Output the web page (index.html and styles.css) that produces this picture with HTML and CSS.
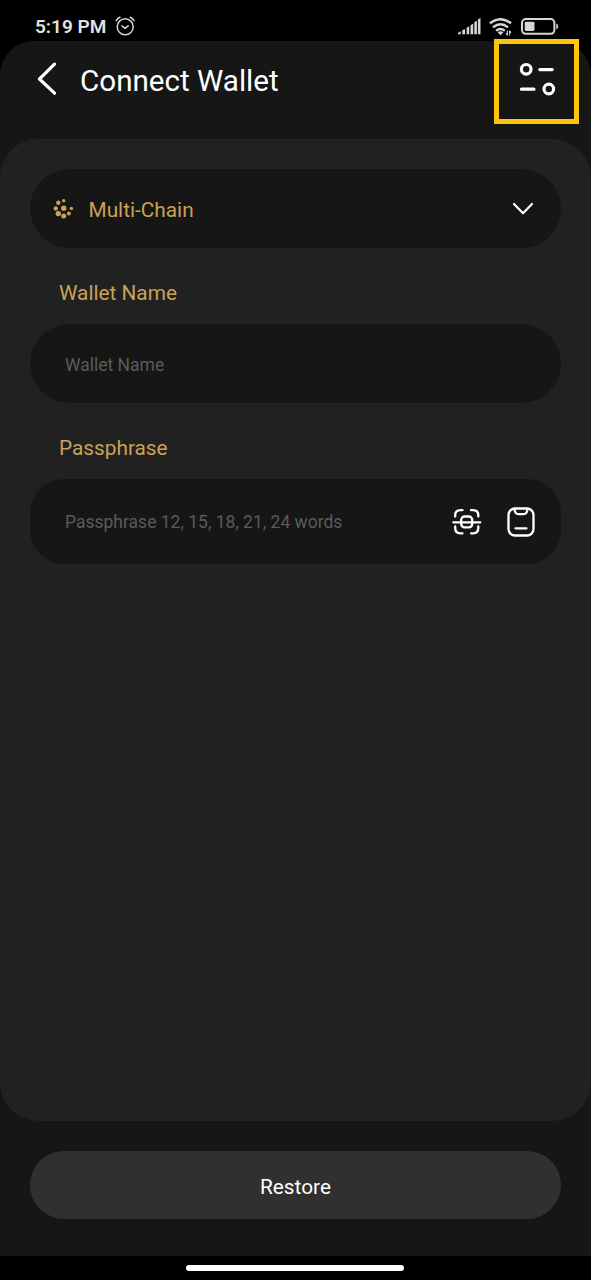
FILE: index.html
```html
<!DOCTYPE html>
<html lang="en">
<head>
<meta charset="utf-8">
<title>Connect Wallet</title>
<link rel="stylesheet" href="styles.css">
</head>
<body>
<div class="phone">
  <div class="status-bar">
    <div class="status-left">
      <span class="clock">5:19 PM</span>
      <svg class="alarm" width="20" height="20" viewBox="0 0 20 20" fill="none" stroke="#d6d6d6" stroke-width="1.5" stroke-linecap="round" stroke-linejoin="round">
        <circle cx="10.2" cy="10.8" r="8"/>
        <path d="M7 9.8l3 2.5 3.2-2.5M1.2 4.6Q2.5 2.4 5 1.2M19 4.6Q17.700 2.400 15.200 1.200"/>
      </svg>
    </div>
    <div class="status-right">
      <svg width="23" height="17" viewBox="0 0 23 17" fill="#d6d6d6">
        <path d="M0 16.200v-1.200l2.800-1.700v2.900zM4.300 12.300l2.700-1.300v5.200h-2.700zM8.600 9.700l2.600-1.500v8h-2.600zM12.500 7.200l2.700-1.500v10.500h-2.700zM16.300 4.200l2.600-1.500v13.500h-2.600zM19.900 1.500l2.600-1.500v16.200h-2.600z"/>
      </svg>
      <svg width="24" height="18" viewBox="0 0 24 18" fill="none" stroke="#d6d6d6" stroke-width="2.400">
        <path d="M.9 5.300Q11.500-2.900 22.100 5.300M4 9.400Q11.500 3.300 19 9.400M7.200 12.800Q11.500 9.300 15.800 12.800"/>
        <path d="M8.600 14.300Q11.500 12.300 14.300 14.300L11.500 17.300z" fill="#d6d6d6" stroke="none"/>
        <path d="M18.300 17.500v-5M18.300 17.200l-1.300-2M20.700 12.500v5M20.700 12.800l1.300 2" stroke-width="1.100"/>
      </svg>
      <svg width="38" height="17" viewBox="0 0 38 17">
        <rect x="1" y="1" width="32.400" height="14.800" rx="3.800" fill="none" stroke="#d6d6d6" stroke-width="2"/>
        <rect x="3.700" y="3.800" width="9.800" height="9.200" rx="1.400" fill="#d6d6d6"/>
        <path d="M35.300 5.800Q37.200 5.800 37.200 8.400T35.300 11z" fill="#d6d6d6"/>
      </svg>
    </div>
  </div>

  <main class="app">
    <header class="header">
      <svg class="back" width="21" height="34" viewBox="0 0 21 34" fill="none" stroke="#fff" stroke-width="3.200" stroke-linecap="round" stroke-linejoin="round">
        <path d="M17.500 2.200L2.500 17l15 14.200"/>
      </svg>
      <h1 class="title">Connect Wallet</h1>
      <button class="settings" aria-label="Settings">
        <svg width="37" height="34" viewBox="0 0 37 34" fill="none" stroke="#fff" stroke-width="3.200" stroke-linecap="round">
          <circle cx="7.200" cy="7.300" r="4.800"/>
          <path d="M20.800 7.600h12.400M2.500 27.200h12.500"/>
          <circle cx="29.800" cy="27" r="4.800"/>
        </svg>
        <span class="highlight"></span>
      </button>
    </header>

    <section class="panel">
      <div class="field chain">
        <svg width="22" height="22" viewBox="0 0 22 22" fill="#c9a255">
          <circle cx="10.700" cy="2.700" r="1.700"/><circle cx="5.300" cy="4.800" r="2.200"/>
          <circle cx="2.800" cy="10.500" r="2.200"/><circle cx="10.700" cy="10.300" r="2.700"/>
          <circle cx="18.400" cy="10.400" r="1.700"/><circle cx="5.300" cy="15.600" r="2.700"/>
          <circle cx="15.900" cy="15.500" r="2"/><circle cx="10.700" cy="17.900" r="2.500"/>
        </svg>
        <span class="chain-name">Multi-Chain</span>
        <svg width="22" height="14" viewBox="0 0 22 14" fill="none" stroke="#fff" stroke-width="2.200" stroke-linecap="round" stroke-linejoin="round">
          <path d="M2 2l9 9.200L20 2"/>
        </svg>
      </div>
      <div class="label">Wallet Name</div>
      <div class="field name"><span class="placeholder">Wallet Name</span></div>
      <div class="label">Passphrase</div>
      <div class="field phrase">
        <span class="placeholder">Passphrase 12, 15, 18, 21, 24 words</span>
        <svg class="scan" width="30" height="28" viewBox="0 0 30 28" fill="none" stroke="#fff" stroke-width="2.300" stroke-linecap="round">
          <path d="M3.200 8.500V7.500Q3.200 2.200 8.500 2.200h2M19 2.200h2Q26.300 2.200 26.300 7.500v1M3.200 18.500v1.500Q3.200 25.300 8.500 25.300h2M19 25.300h2Q26.300 25.300 26.300 20v-1.500M1.300 14.300h27"/>
          <rect x="9.200" y="8.500" width="11" height="10.800" rx="3.300"/>
        </svg>
        <svg width="28" height="30" viewBox="0 0 28 30" fill="none" stroke="#fff" stroke-width="2.300" stroke-linecap="round" stroke-linejoin="round">
          <rect x="1.500" y="1.500" width="25" height="27" rx="6.500"/>
          <path d="M7.500 2Q8 7.200 11.500 7.200h5Q20 7.200 20.500 2M8.500 21.300h11"/>
        </svg>
      </div>
    </section>

    <button class="restore">Restore</button>
  </main>

  <div class="nav-bar"><span class="home"></span></div>
</div>
</body>
</html>
```
FILE: styles.css
```css
* { box-sizing: border-box; }

body {
  margin: 0;
  background: #000;
  color: #fff;
  font-family: Roboto, "Liberation Sans", sans-serif;
}

button {
  border: 0;
  padding: 0;
  color: inherit;
  font: inherit;
}

svg { display: block; flex: none; }

.phone {
  display: flex;
  flex-direction: column;
  width: 591px;
  height: 1280px;
}

.status-bar {
  display: flex;
  justify-content: space-between;
  height: 41px;
  padding: 16px 32px 0 35px;
}

.status-left { display: flex; gap: 9px; }

.clock {
  color: #e2e2e2;
  font-size: 19px;
  font-weight: 600;
  line-height: 22px;
  white-space: nowrap;
}

.status-right { display: flex; gap: 8px; padding-top: 2px; }

.app {
  display: flex;
  flex-direction: column;
  flex: 1;
  border-radius: 34px 34px 0 0;
  background: #161616;
}

.header {
  display: flex;
  align-items: center;
  height: 98px;
  padding: 0 35px 23px 37px;
}

.title {
  flex: 1;
  margin: 4px 0 0 22px;
  font-size: 29.6px;
  font-weight: 400;
  line-height: 36px;
  white-space: nowrap;
}

.settings { position: relative; background: none; }

.highlight {
  position: absolute;
  top: -23px;
  left: -25px;
  width: 85px;
  height: 85px;
  border: 5px solid #fdc50f;
}

.panel {
  height: 982px;
  padding: 30px 30px 0;
  border-radius: 38px;
  background: #212121;
}

.field {
  display: flex;
  align-items: center;
  height: 79px;
  border-radius: 40px;
  background: #161616;
}

.chain { padding: 0 27px 0 23px; }

.chain-name {
  flex: 1;
  margin: 3px 0 0 13.5px;
  color: #c9a255;
  font-size: 20.8px;
}

.label {
  height: 76px;
  padding: 31px 0 0 29px;
  color: #c9a255;
  font-size: 20.8px;
  line-height: 28px;
}

.name { padding: 2px 35px 0; }

.placeholder {
  flex: 1;
  color: #5b5b5b;
  font-size: 17.5px;
  white-space: nowrap;
}

.phrase {
  height: 85px;
  padding: 0 26px 0 35px;
  border-radius: 34px;
}

.scan { margin-right: 25px; }

.restore {
  height: 68px;
  margin: 30px 30px 0;
  padding-top: 3px;
  border-radius: 34px;
  background: #303030;
  font-size: 20.8px;
}

.nav-bar {
  display: flex;
  justify-content: center;
  height: 24px;
  padding: 9px 1px 0 0;
}

.home {
  width: 218px;
  height: 6px;
  border-radius: 3px;
  background: #fff;
}
```
